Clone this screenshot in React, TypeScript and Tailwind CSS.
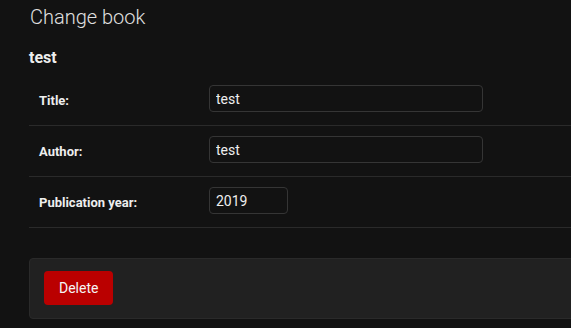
import React from "react";

const font = { fontFamily: "Roboto, 'Liberation Sans', sans-serif" };

function Row({ label, value, w }: { label: string; value: string; w: string }) {
  return (
    <div className="flex items-start h-[51px] pt-[10px] pl-[10px] border-b border-[#2a2a2a]">
      <label className="w-[170px] shrink-0 pt-[6px] text-[13px] leading-[20px] font-bold text-[#eeeeee]">
        {label}
      </label>
      <input
        readOnly
        value={value}
        className={`${w} h-[27px] px-[6px] text-[14px] text-[#eeeeee] bg-[#121212] border border-[#353535] rounded-[4px] outline-none`}
        style={font}
      />
    </div>
  );
}

export default function App() {
  return (
    <div className="w-[571px] h-[328px] overflow-hidden bg-[#121212]" style={font}>
      <div className="pl-[29px] pt-[5px]">
        <h1 className="text-[20px] leading-[24px] font-light text-[#e0e0e0] ml-[1px]">Change book</h1>
        <h2 className="mt-[19px] text-[16px] leading-[20px] font-bold text-[#eeeeee]">test</h2>
        <div className="mt-[7px] w-[600px]">
          <Row label="Title:" value="test" w="w-[274px]" />
          <Row label="Author:" value="test" w="w-[274px]" />
          <Row label="Publication year:" value="2019" w="w-[79px]" />
        </div>
        <div className="mt-[30px] w-[600px] h-[61px] bg-[#212121] border border-[#2a2a2a] rounded-[4px] pt-[12px] pl-[14px]">
          <button className="h-[34px] px-[15px] bg-[#ba0000] rounded-[4px] text-[14px] text-[#f5f5f5]" style={font}>
            Delete
          </button>
        </div>
      </div>
    </div>
  );
}
